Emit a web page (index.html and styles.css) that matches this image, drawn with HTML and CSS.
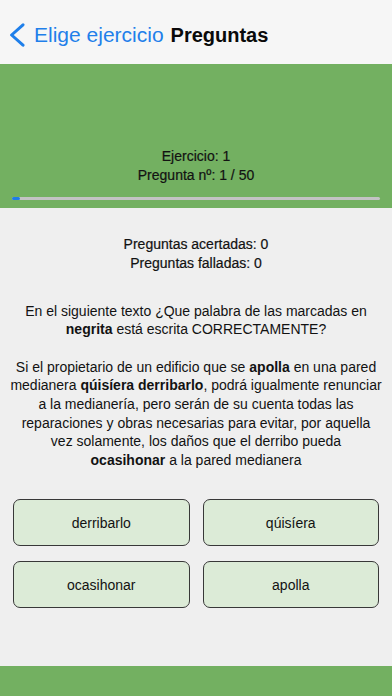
FILE: index.html
```html
<!DOCTYPE html>
<html lang="es">
<head>
<meta charset="utf-8">
<title>Preguntas</title>
<link rel="stylesheet" href="styles.css">
</head>
<body>
<div class="screen">
  <header class="nav">
    <a class="back" href="#">
      <svg class="chev" width="16" height="24" viewBox="0 0 16 24"><polyline points="14,1.8 2.6,12 14,22.2" fill="none" stroke="#1f7fea" stroke-width="3" stroke-linecap="round" stroke-linejoin="round"/></svg>
      <span class="back-label">Elige ejercicio</span>
    </a>
    <span class="title">Preguntas</span>
  </header>

  <section class="banner">
    <div class="banner-info">
      <div>Ejercicio: 1</div>
      <div>Pregunta nº: 1 / 50</div>
    </div>
    <div class="progress"><div class="progress-fill" style="width:8px"></div></div>
  </section>

  <section class="stats">
    <div>Preguntas acertadas: 0</div>
    <div>Preguntas falladas: 0</div>
  </section>

  <section class="question">
    <p class="q-text">En el siguiente texto ¿Que palabra de las marcadas en<br><b>negrita</b> está escrita CORRECTAMENTE?</p>
    <p class="q-text">Si el propietario de un edificio que se <b>apolla</b> en una pared<br>medianera <b>qúisíera derribarlo</b>, podrá igualmente renunciar<br>a la medianería, pero serán de su cuenta todas las<br>reparaciones y obras necesarias para evitar, por aquella<br>vez solamente, los daños que el derribo pueda<br><b>ocasihonar</b> a la pared medianera</p>
  </section>

  <section class="answers">
    <button class="answer">derribarlo</button>
    <button class="answer">qúisíera</button>
    <button class="answer">ocasihonar</button>
    <button class="answer">apolla</button>
  </section>

  <footer class="bottom-bar"></footer>
</div>
</body>
</html>
```

FILE: styles.css
```css
* { box-sizing: border-box; }
html, body { margin: 0; padding: 0; }
body {
  background: #efefef;
  font-family: "Liberation Sans", Arial, sans-serif;
  color: #121212;
}
.screen {
  min-height: 696px;
  display: flex;
  flex-direction: column;
}
.nav {
  height: 64px;
  padding: 6px 0 0 9px;
  background: #f6f6f6;
  display: flex;
  align-items: center;
  gap: 7px;
}
.back {
  display: flex;
  align-items: center;
  gap: 9px;
  text-decoration: none;
  color: #1f7fea;
}
.chev { display: block; }
.back-label { font-size: 21px; }
.title {
  font-size: 20px;
  font-weight: bold;
  color: #0a0a0a;
}
.banner {
  height: 144px;
  background: #73b061;
  padding-top: 83px;
}
.banner-info {
  text-align: center;
  font-size: 14px;
  line-height: 18.5px;
  -webkit-text-stroke: 0.2px #121212;
}
.progress {
  margin: 13px 12px 0;
  height: 3px;
  background: #c3c3c3;
  border-radius: 2px;
}
.progress-fill {
  height: 3px;
  background: #1d7de8;
  border-radius: 2px;
}
.stats {
  padding-top: 27px;
  text-align: center;
  font-size: 14px;
  line-height: 18.5px;
  -webkit-text-stroke: 0.2px #121212;
}
.question {
  padding: 29.5px 6px 0;
  text-align: center;
  font-size: 14px;
  line-height: 18.7px;
}
.q-text { margin: 0 0 18.7px; }
.q-text:last-child { margin-bottom: 0; }
.answers {
  margin-top: 29.5px;
  padding: 0 13px;
  display: grid;
  grid-template-columns: 1fr 1fr;
  column-gap: 13px;
  row-gap: 15px;
}
.answer {
  height: 47px;
  background: #dcebd7;
  border: 1.3px solid #383838;
  border-radius: 7px;
  font-family: "Liberation Sans", Arial, sans-serif;
  font-size: 14px;
  color: #121212;
  padding: 0;
}
.bottom-bar {
  margin-top: auto;
  height: 30px;
  background: #73b061;
}
```
